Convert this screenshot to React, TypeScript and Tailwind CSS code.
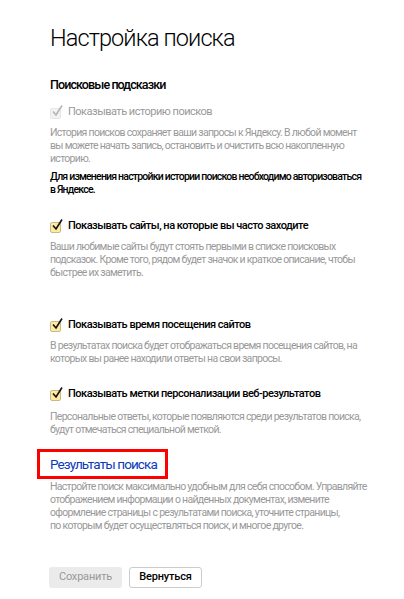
import React from 'react';

type Option = {
  label: string;
  text: string[];
  gap: string;
  descGap: string;
};

const OPTIONS: Option[] = [
  {
    label: 'Показывать сайты, на которые вы часто заходите',
    text: [
      'Ваши любимые сайты будут стоять первыми в списке поисковых',
      'подсказок. Кроме того, рядом будет значок и краткое описание, чтобы',
      'быстрее их заметить.',
    ],
    gap: 'mt-[22px]',
    descGap: 'mt-[6px]',
  },
  {
    label: 'Показывать время посещения сайтов',
    text: [
      'В результатах поиска будет отображаться время посещения сайтов, на',
      'которых вы ранее находили ответы на свои запросы.',
    ],
    gap: 'mt-[38px]',
    descGap: 'mt-[6px]',
  },
  {
    label: 'Показывать метки персонализации веб-результатов',
    text: [
      'Персональные ответы, которые появляются среди результатов поиска,',
      'будут отмечаться специальной меткой.',
    ],
    gap: 'mt-[21px]',
    descGap: 'mt-[8px]',
  },
];

function Checkbox({ disabled }: { disabled?: boolean }) {
  return (
    <span className="relative inline-block w-[16px] h-[16px] shrink-0">
      <span
        className={`absolute left-[2px] top-[4px] w-[11px] h-[11px] rounded-[2px] border ${
          disabled ? 'bg-[#f2f2f2] border-[#e6e6e6]' : 'bg-[#ffeba0] border-[#c9b98a]'
        }`}
      />
      <svg className="absolute left-[2px] top-0" width="14" height="14" viewBox="0 0 14 14">
        <path
          d="M3 7.5 L6 11 L12 1.5"
          fill="none"
          stroke={disabled ? '#b5b5b5' : '#111'}
          strokeWidth="1.6"
        />
      </svg>
    </span>
  );
}

function Desc({ lines, className }: { lines: string[]; className?: string }) {
  return (
    <div
      className={`text-[10.5px] leading-[13px] text-[#999] whitespace-nowrap tracking-[-0.7px] ${className ?? ''}`}
    >
      {lines.map((l) => (
        <div key={l}>{l}</div>
      ))}
    </div>
  );
}

export default function App() {
  return (
    <div className="w-[404px] h-[599px] bg-white overflow-hidden pl-[50px] pt-[22px] font-['Roboto',sans-serif] text-black">
      {/* Title */}
      <h1 className="text-[23.5px] leading-[32px] font-light whitespace-nowrap tracking-[-0.9px]">
        Настройка поиска
      </h1>

      {/* Search suggestions */}
      <h2 className="mt-[21px] text-[12.5px] leading-[20px] font-medium whitespace-nowrap tracking-[-0.9px]">
        Поисковые подсказки
      </h2>

      <div className="mt-[9px] flex items-center h-[16px] -ml-[2px] gap-[4px] whitespace-nowrap">
        <Checkbox disabled />
        <span className="text-[11px] text-[#999] tracking-[-0.5px]">Показывать историю поисков</span>
      </div>
      <Desc
        className="mt-[6px]"
        lines={[
          'История поисков сохраняет ваши запросы к Яндексу. В любой момент',
          'вы можете начать запись, остановить и очистить всю накопленную',
          'историю.',
        ]}
      />
      <div className="mt-[5px] text-[10.5px] leading-[13px] font-medium whitespace-nowrap tracking-[-0.8px]">
        <div>Для изменения настройки истории поисков необходимо авторизоваться</div>
        <div>в Яндексе.</div>
      </div>

      {OPTIONS.map((o) => (
        <div key={o.label}>
          <div className={`${o.gap} flex items-center h-[16px] -ml-[2px] gap-[4px] whitespace-nowrap`}>
            <Checkbox />
            <span className="text-[11px] font-medium tracking-[-0.5px]">{o.label}</span>
          </div>
          <Desc className={o.descGap} lines={o.text} />
        </div>
      ))}

      {/* Search results link */}
      <div className="mt-[13px] -ml-[13px] inline-block border-[3px] border-[#ff0000] pl-[10px] pr-[8px]">
        <a
          href="#"
          className="block text-[13.5px] leading-[24px] text-[#0a3bb8] whitespace-nowrap tracking-[-0.9px]"
        >
          Результаты поиска
        </a>
      </div>
      <Desc
        className="mt-[1px]"
        lines={[
          'Настройте поиск максимально удобным для себя способом. Управляйте',
          'отображением информации о найденных документах, измените',
          'оформление страницы с результатами поиска, уточните страницы,',
          'по которым будет осуществляться поиск, и многое другое.',
        ]}
      />

      {/* Buttons */}
      <div className="mt-[35px] -ml-[1px] flex gap-[7px]">
        <button
          type="button"
          className="w-[73px] h-[21px] rounded-[3px] bg-[#ebebeb] text-[11px] text-[#999] tracking-[-0.2px]"
        >
          Сохранить
        </button>
        <button
          type="button"
          className="w-[73px] h-[21px] rounded-[3px] border border-[#ccc] bg-white text-[11px] font-medium text-black tracking-[-0.2px]"
        >
          Вернуться
        </button>
      </div>
    </div>
  );
}
